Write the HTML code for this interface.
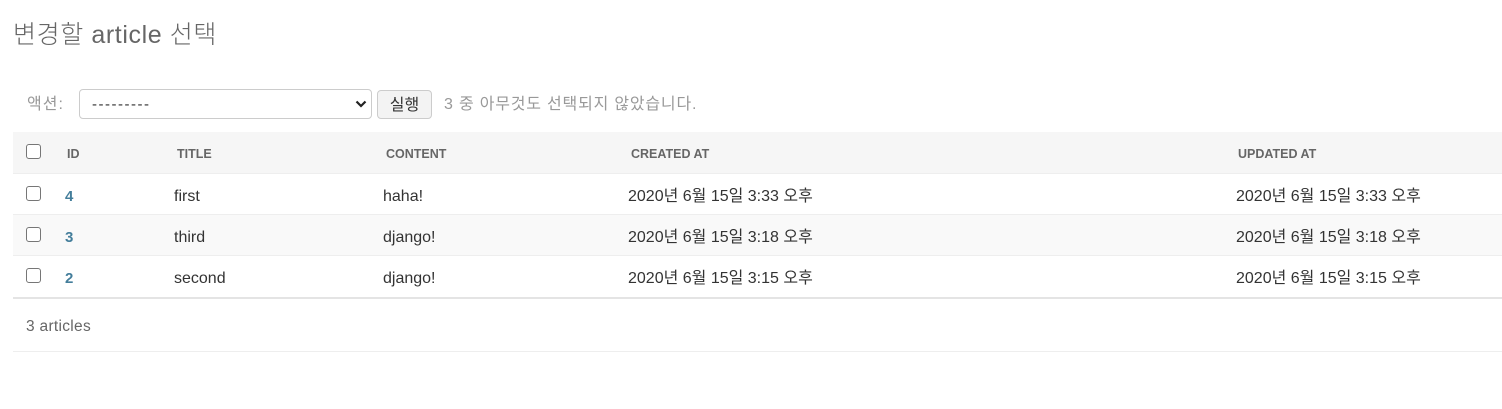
<!DOCTYPE html>
<html><head><meta charset="utf-8"><style>
body{margin:0;background:#fff;font-family:"Liberation Sans","Noto Sans CJK KR",sans-serif;color:#333;font-size:16px;width:1502px;height:409px;position:relative;overflow:hidden}
.a{position:absolute;white-space:nowrap;line-height:18px}
h1{position:absolute;left:13px;top:22px;margin:0;font-weight:300;font-size:25px;line-height:26px;letter-spacing:0.6px;color:#666}
.sel{position:absolute;left:79px;top:89px;width:293px;height:30px;border:1px solid #ccc;border-radius:4px;box-sizing:border-box}
.btn{position:absolute;left:377px;top:90px;width:55px;height:29px;border:1px solid #ccc;border-radius:4px;background:#f3f3f3;box-sizing:border-box;text-align:center;line-height:29px;font-size:16px;color:#333}
.row{position:absolute;left:13px;width:1489px;box-sizing:border-box}
.cb{position:absolute;left:13px;width:13px;height:13px;border:1px solid #767676;border-radius:3px;background:#fff}
.h{font-size:12.5px;font-weight:bold;color:#666}
.id{color:#447e9b;font-weight:bold;font-size:15px}
.t{top:14px}
</style></head><body>
<h1>변경할 article 선택</h1>
<div class="a" style="left:27px;top:96px;color:#999;font-size:16px;letter-spacing:1px">액션:</div>
<div class="sel"><span class="a" style="left:12px;top:6px;font-size:15px;letter-spacing:1.5px">---------</span>
<svg class="a" style="left:275px;top:9px" width="12" height="10" viewBox="0 0 12 10"><path d="M1.5 2.5 6 7 10.5 2.5" fill="none" stroke="#222" stroke-width="2.2"/></svg></div>
<div class="btn">실행</div>
<div class="a" style="left:444px;top:96px;color:#999;font-size:16px;letter-spacing:0.8px">3 중 아무것도 선택되지 않았습니다.</div>

<div class="row" style="top:132px;height:42px;background:#f6f6f6;border-bottom:1px solid #eee">
<div class="cb" style="top:12px"></div>
<div class="a h" style="left:54px;top:13px">ID</div>
<div class="a h" style="left:164px;top:13px">TITLE</div>
<div class="a h" style="left:373px;top:13px">CONTENT</div>
<div class="a h" style="left:618px;top:13px">CREATED AT</div>
<div class="a h" style="left:1225px;top:13px">UPDATED AT</div>
</div>
<div class="row" style="top:174px;height:41px;border-bottom:1px solid #eee">
<div class="cb" style="top:12px"></div>
<div class="a id t" style="left:52px">4</div>
<div class="a t" style="left:161px">first</div>
<div class="a t" style="left:370px">haha!</div>
<div class="a t" style="left:615px">2020년 6월 15일 3:33 오후</div>
<div class="a t" style="left:1223px">2020년 6월 15일 3:33 오후</div>
</div>
<div class="row" style="top:215px;height:41px;background:#f9f9f9;border-bottom:1px solid #eee">
<div class="cb" style="top:12px"></div>
<div class="a id t" style="left:52px">3</div>
<div class="a t" style="left:161px">third</div>
<div class="a t" style="left:370px">django!</div>
<div class="a t" style="left:615px">2020년 6월 15일 3:18 오후</div>
<div class="a t" style="left:1223px">2020년 6월 15일 3:18 오후</div>
</div>
<div class="row" style="top:256px;height:43px;border-bottom:2px solid #e4e4e4">
<div class="cb" style="top:12px"></div>
<div class="a id t" style="left:52px">2</div>
<div class="a t" style="left:161px">second</div>
<div class="a t" style="left:370px">django!</div>
<div class="a t" style="left:615px">2020년 6월 15일 3:15 오후</div>
<div class="a t" style="left:1223px">2020년 6월 15일 3:15 오후</div>
</div>
<div class="a" style="left:26px;top:318px;color:#666;font-size:15.5px;letter-spacing:0.3px">3 articles</div>
<div class="row" style="top:351px;height:1px;background:#eee"></div>
</body></html>
